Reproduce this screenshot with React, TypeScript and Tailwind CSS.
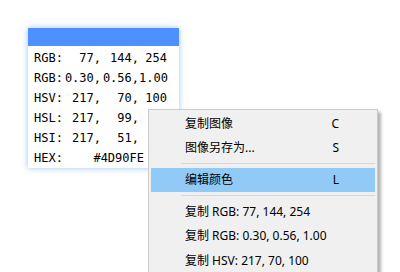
const mono = { fontFamily: '"DejaVu Sans Mono", "Liberation Mono", monospace' };

type Row = { label: string; a?: string; b?: string; c?: string; hex?: string };

const rows: Row[] = [
  { label: "RGB:", a: "77,", b: "144,", c: "254" },
  { label: "RGB:", a: "0.30,", b: "0.56,", c: "1.00" },
  { label: "HSV:", a: "217,", b: "70,", c: "100" },
  { label: "HSL:", a: "217,", b: "99,", c: "65" },
  { label: "HSI:", a: "217,", b: "51,", c: "70" },
  { label: "HEX:", hex: "#4D90FE" },
];

function MenuItem({ text, keyHint, active }: { text: string; keyHint?: string; active?: boolean }) {
  return (
    <div className={`flex h-[24px] items-center pl-[34px] pr-[36px] ${active ? "bg-[#91c9f7]" : ""}`}>
      <span className="flex-1 text-[12px] text-black">{text}</span>
      {keyHint && <span className="text-[12px] text-black">{keyHint}</span>}
    </div>
  );
}

function Separator() {
  return (
    <div className="h-[8px] pt-[3px] pl-[30px]">
      <div className="h-px bg-[#d7d7d7]" />
    </div>
  );
}

export default function App() {
  return (
    <div className="relative h-[272px] w-[400px] overflow-hidden bg-white">
      <div className="ml-[28px] mt-[28px] w-[151px] bg-white shadow-[0_0_6px_rgba(77,144,254,0.55)]">
        <div className="h-[18px] bg-[#4d90fe]" />
        <div className="pt-[2px] pl-[6px] text-[12px] text-black" style={mono}>
          {rows.map((r, i) => (
            <div key={i} className="flex h-[20px] items-center leading-none">
              <span className="w-[30px]">{r.label}</span>
              {r.hex ? (
                <span className="w-[80px] text-right">{r.hex}</span>
              ) : (
                <>
                  <span className="w-[37px] text-right">{r.a}</span>
                  <span className="w-[38px] text-right">{r.b}</span>
                  <span className="w-[28px] text-right">{r.c}</span>
                </>
              )}
            </div>
          ))}
        </div>
      </div>

      <div
        className="absolute left-[148px] top-[109px] w-[230px] border border-[#cccccc] bg-[#f0f0f0] p-[2px] shadow-[3px_3px_3px_rgba(0,0,0,0.3)]"
        style={{ fontFamily: '"Noto Sans", "Noto Sans CJK SC", sans-serif' }}
      >
        <MenuItem text="复制图像" keyHint="C" />
        <MenuItem text="图像另存为..." keyHint="S" />
        <Separator />
        <MenuItem text="编辑颜色" keyHint="L" active />
        <Separator />
        <MenuItem text="复制 RGB: 77, 144, 254" />
        <MenuItem text="复制 RGB: 0.30, 0.56, 1.00" />
        <div className="pt-[1px]">
          <MenuItem text="复制 HSV: 217, 70, 100" />
        </div>
        <div className="h-[30px]" />
      </div>
    </div>
  );
}
